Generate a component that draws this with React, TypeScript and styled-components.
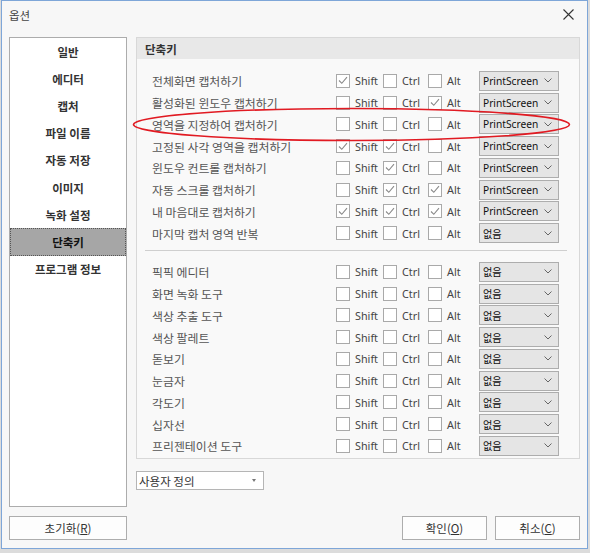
import React from "react";
import styled, { createGlobalStyle } from "styled-components";

const Global = createGlobalStyle`
  html, body { margin: 0; padding: 0; background: #dcdcdc; }
  body { font-family: "Noto Sans", "Noto Sans CJK KR", sans-serif; }
  * { box-sizing: border-box; }
`;

const Window = styled.div`
  position: relative;
  margin-left: 1px;
  width: 587px;
  height: 549px;
  background: #f7f7f7;
  border: 1px solid #7ea6d8;
  display: flex;
  flex-direction: column;
`;

const TitleBar = styled.div`
  height: 30px;
  display: flex;
  align-items: center;
  justify-content: space-between;
  padding: 0 13px 3px 7px;
`;

const Title = styled.span`
  font-family: "Noto Sans CJK KR", sans-serif;
  font-size: 11.5px;
  color: #444;
`;

const CloseIcon = styled.svg`
  width: 11px;
  height: 11px;
  display: block;
`;

const Body = styled.div`
  flex: 1;
  display: flex;
  flex-direction: column;
  padding: 6px 7px 8px 7px;
`;

const Main = styled.div`
  display: flex;
  gap: 9px;
  height: 470px;
`;

const Nav = styled.div`
  width: 118px;
  height: 100%;
  background: #fff;
  border: 1px solid #acacac;
  display: flex;
  flex-direction: column;
`;

const NavItem = styled.div<{ $active?: boolean }>`
  height: 27.2px;
  display: flex;
  align-items: center;
  justify-content: center;
  font-family: "Noto Sans CJK KR", sans-serif;
  font-size: 11.5px;
  font-weight: 700;
  color: ${(p) => (p.$active ? "#111" : "#333")};
  background: ${(p) => (p.$active ? "#a6a6a6" : "transparent")};
  border: 1px dotted ${(p) => (p.$active ? "#555" : "transparent")};
`;

const ContentCol = styled.div`
  flex: 1;
  display: flex;
  flex-direction: column;
`;

const GroupBox = styled.div`
  height: 422px;
  background: #f9f9f9;
  border: 1px solid #d8d8d8;
  display: flex;
  flex-direction: column;
`;

const GroupHeader = styled.div`
  height: 21px;
  background: #e8e8e8;
  display: flex;
  align-items: center;
  padding-left: 8px;
  font-family: "Noto Sans CJK KR", sans-serif;
  font-size: 11.5px;
  font-weight: 700;
  color: #333;
`;

const Rows = styled.div<{ $top: number }>`
  display: flex;
  flex-direction: column;
  padding-top: ${(p) => p.$top}px;
`;

const Separator = styled.div`
  height: 1px;
  background: #cfcfcf;
  margin: 6px 12px 10px 8px;
`;

const Row = styled.div`
  height: 21.75px;
  display: grid;
  grid-template-columns: 184px 47px 45px 51px 80px;
  align-items: center;
  padding-left: 15px;
`;

const RowLabel = styled.span`
  font-family: "Noto Sans CJK KR", sans-serif;
  font-size: 11.9px;
  color: #555;
  white-space: nowrap;
`;

const Mod = styled.label`
  display: flex;
  align-items: center;
  gap: 5px;
  font-family: "Noto Sans", sans-serif;
  font-size: 10.8px;
  color: #444;
`;

const Box = styled.span`
  width: 14px;
  height: 14px;
  border: 1px solid #a9a9a9;
  background: #fff;
  display: flex;
  align-items: center;
  justify-content: center;
`;

const Select = styled.div`
  height: 20px;
  background: #e5e5e5;
  border: 1px solid #adadad;
  display: flex;
  align-items: center;
  justify-content: space-between;
  padding: 0 6px 0 3px;
  font-family: "Noto Sans", "Noto Sans CJK KR", sans-serif;
  font-size: 10.2px;
  color: #111;
`;

const Chevron = styled.svg`
  width: 8px;
  height: 5px;
  display: block;
`;

const PresetSelect = styled.div`
  margin-top: 12px;
  width: 128px;
  height: 19px;
  background: #fff;
  border: 1px solid #b5b5b5;
  display: flex;
  align-items: center;
  justify-content: space-between;
  padding: 0 7px 0 2px;
  font-family: "Noto Sans CJK KR", sans-serif;
  font-size: 11.5px;
  color: #333;
`;

const SmallArrow = styled.span`
  width: 0;
  height: 0;
  border-left: 2.5px solid transparent;
  border-right: 2.5px solid transparent;
  border-top: 3px solid #777;
`;

const Footer = styled.div`
  margin-top: 9px;
  display: flex;
  align-items: center;
`;

const Spacer = styled.div`
  flex: 1;
`;

const ButtonGroup = styled.div`
  display: flex;
  gap: 8px;
`;

const Button = styled.button<{ $w: number }>`
  width: ${(p) => p.$w}px;
  height: 24px;
  background: #fdfdfd;
  border: 1px solid #adadad;
  font-family: "Noto Sans CJK KR", sans-serif;
  font-size: 11.5px;
  color: #333;
  padding: 0;
  u { text-decoration: underline; }
`;

const Annotation = styled.svg`
  position: absolute;
  left: 129px;
  top: 105px;
  width: 442px;
  height: 38px;
  pointer-events: none;
`;

const Check = () => (
  <svg width="10" height="9" viewBox="0 0 10 9">
    <polyline points="1,4.5 3.8,7.3 9,1.2" fill="none" stroke="#8a8a8a" strokeWidth="1.1" />
  </svg>
);

const CheckBox = ({ on, label }: { on: boolean; label: string }) => (
  <Mod>
    <Box>{on && <Check />}</Box>
    {label}
  </Mod>
);

type Shortcut = { name: string; s: boolean; c: boolean; a: boolean; key: string };

const top: Shortcut[] = [
  { name: "전체화면 캡처하기", s: true, c: false, a: false, key: "PrintScreen" },
  { name: "활성화된 윈도우 캡처하기", s: false, c: false, a: true, key: "PrintScreen" },
  { name: "영역을 지정하여 캡처하기", s: false, c: false, a: false, key: "PrintScreen" },
  { name: "고정된 사각 영역을 캡처하기", s: true, c: true, a: false, key: "PrintScreen" },
  { name: "윈도우 컨트롤 캡처하기", s: false, c: true, a: false, key: "PrintScreen" },
  { name: "자동 스크롤 캡처하기", s: false, c: true, a: true, key: "PrintScreen" },
  { name: "내 마음대로 캡처하기", s: true, c: true, a: true, key: "PrintScreen" },
  { name: "마지막 캡처 영역 반복", s: false, c: false, a: false, key: "없음" },
];

const tools = [
  "픽픽 에디터",
  "화면 녹화 도구",
  "색상 추출 도구",
  "색상 팔레트",
  "돋보기",
  "눈금자",
  "각도기",
  "십자선",
  "프리젠테이션 도구",
];

const bottom: Shortcut[] = tools.map((name) => ({ name, s: false, c: false, a: false, key: "없음" }));

const navItems = ["일반", "에디터", "캡처", "파일 이름", "자동 저장", "이미지", "녹화 설정", "단축키", "프로그램 정보"];

const ShortcutRow = ({ item }: { item: Shortcut }) => (
  <Row>
    <RowLabel>{item.name}</RowLabel>
    <CheckBox on={item.s} label="Shift" />
    <CheckBox on={item.c} label="Ctrl" />
    <CheckBox on={item.a} label="Alt" />
    <Select>
      <span>{item.key}</span>
      <Chevron viewBox="0 0 8 5">
        <polyline points="0.5,0.5 4,4 7.5,0.5" fill="none" stroke="#666" strokeWidth="1" />
      </Chevron>
    </Select>
  </Row>
);

export default function App() {
  return (
    <>
      <Global />
      <Window>
        <TitleBar>
          <Title>옵션</Title>
          <CloseIcon viewBox="0 0 11 11">
            <path d="M0.5 0.5 L10.5 10.5 M10.5 0.5 L0.5 10.5" stroke="#333" strokeWidth="1.1" />
          </CloseIcon>
        </TitleBar>
        <Body>
          <Main>
            <Nav>
              {navItems.map((n) => (
                <NavItem key={n} $active={n === "단축키"}>
                  {n}
                </NavItem>
              ))}
            </Nav>
            <ContentCol>
              <GroupBox>
                <GroupHeader>단축키</GroupHeader>
                <Rows $top={11}>
                  {top.map((r) => (
                    <ShortcutRow key={r.name} item={r} />
                  ))}
                </Rows>
                <Separator />
                <Rows $top={0}>
                  {bottom.map((r) => (
                    <ShortcutRow key={r.name} item={r} />
                  ))}
                </Rows>
              </GroupBox>
              <PresetSelect>
                <span>사용자 정의</span>
                <SmallArrow />
              </PresetSelect>
            </ContentCol>
          </Main>
          <Footer>
            <Button $w={118}>
              초기화(<u>R</u>)
            </Button>
            <Spacer />
            <ButtonGroup>
              <Button $w={85}>
                확인(<u>O</u>)
              </Button>
              <Button $w={85}>
                취소(<u>C</u>)
              </Button>
            </ButtonGroup>
          </Footer>
        </Body>
        <Annotation viewBox="0 0 442 38">
          <ellipse cx="220.5" cy="18.5" rx="218" ry="16" fill="none" stroke="#e11a22" strokeWidth="1.6" />
        </Annotation>
      </Window>
    </>
  );
}
